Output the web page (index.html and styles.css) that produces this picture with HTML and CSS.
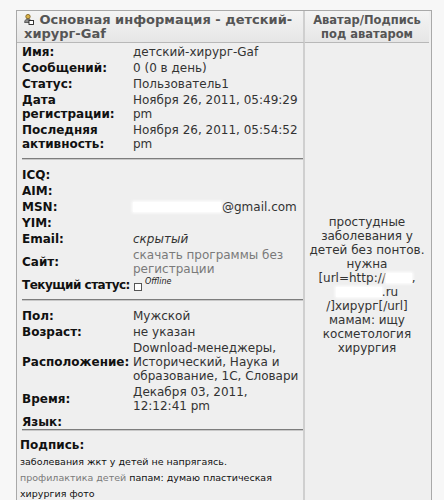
FILE: index.html
```html
<html lang="ru">
<head>
    <meta charset="UTF-8">
    <link rel="stylesheet" href="styles.css">
    <title>Профиль</title>
</head>
<body>

    <div class="profile">
        <div class="head head-main">
            <svg class="user-icon" width="10" height="11" viewBox="0 0 10 11">
                <circle cx="4" cy="2.6" r="2.2" fill="#d9b24a" stroke="#7a5a14" stroke-width="0.8"/>
                <path d="M0.6 8.5 C0.8 5.8 2.2 5 4 5 C5.8 5 7.2 5.8 7.4 8.5 Z" fill="#8c8c8c" stroke="#444" stroke-width="0.8"/>
                <rect x="5" y="6.5" width="4.5" height="4" fill="#fff" stroke="#222" stroke-width="0.9"/>
            </svg>
            Основная информация - детский-хирург-Gaf
        </div>
        <div class="head head-side">Аватар/Подпись под аватаром</div>

        <div class="main-cell">
            <div class="stats">
                <span class="label">Имя:</span><span class="value">детский-хирург-Gaf</span>
                <span class="label">Сообщений:</span><span class="value">0 (0 в день)</span>
                <span class="label">Статус:</span><span class="value">Пользователь1</span>
                <span class="label">Дата регистрации:</span><span class="value">Ноября 26, 2011, 05:49:29 pm</span>
                <span class="label">Последняя активность:</span><span class="value">Ноября 26, 2011, 05:54:52 pm</span>
            </div>
            <hr class="sep">
            <div class="stats">
                <span class="label">ICQ:</span><span class="value"></span>
                <span class="label">AIM:</span><span class="value"></span>
                <span class="label">MSN:</span><span class="value"><span class="blot mail-blot"></span>@gmail.com</span>
                <span class="label">YIM:</span><span class="value"></span>
                <span class="label">Email:</span><span class="value"><em>скрытый</em></span>
                <span class="label">Сайт:</span><span class="value link">скачать программы без регистрации</span>
                <span class="label label-tight">Текущий статус:</span><span class="value"><span class="status-box"></span><em class="offline">Offline</em></span>
            </div>
            <hr class="sep">
            <div class="stats">
                <span class="label">Пол:</span><span class="value">Мужской</span>
                <span class="label">Возраст:</span><span class="value">не указан</span>
                <span class="label">Расположение:</span><span class="value">Download-менеджеры, Исторический, Наука и образование, 1С, Словари</span>
                <span class="label">Время:</span><span class="value">Декабря 03, 2011, 12:12:41 pm</span>
                <span class="label">Язык:</span><span class="value"></span>
            </div>
            <hr class="sep sep-last">
            <div class="signature">
                <div class="sig-title">Подпись:</div>
                <p>заболевания жкт у детей не напрягаясь. <span class="link">профилактика детей</span> папам: думаю пластическая хирургия фото</p>
            </div>
        </div>

        <div class="side-cell">
            <p class="avatar-text">простудные заболевания у детей без понтов. нужна <span class="nowrap">[url=http://<span class="blot blot-a"></span>,</span><br><span class="blot blot-b"></span>.ru<br>/]хирург[/url] мамам: ищу косметология хирургия</p>
        </div>
    </div>

</body>
</html>
```

FILE: styles.css
```css
body {
    margin: 0;
    background-color: #f7f7f7;
    font-family: "DejaVu Sans", Verdana, sans-serif;
}

.profile {
    display: grid;
    grid-template-columns: 288px 124px;
    margin: 10px 0 0 16px;
    width: 414px;
    border: 1px solid #a9a9a9;
    border-bottom: 2px solid #b5b5b5;
    background-color: #efefef;
}

.head {
    padding: 2px 3px 1px 3px;
    font-size: 13px;
    line-height: 14px;
    font-weight: bold;
    color: #555;
    background: linear-gradient(#f4f4f4, #e6e6e6);
    border-bottom: 1px solid #b8b8b8;
}

.head-main {
    padding-left: 7px;
    border-right: 2px solid #cfcfcf;
}

.head-side {
    font-size: 11.5px;
    text-align: center;
    padding-left: 1px;
    padding-right: 1px;
}

.user-icon {
    vertical-align: -1px;
    margin-right: 1px;
}

.main-cell {
    padding: 2px 3px 0 5px;
    border-right: 2px solid #cfcfcf;
}

.stats {
    display: grid;
    grid-template-columns: 111px 1fr;
    row-gap: 2px;
    align-items: center;
    font-size: 12px;
    line-height: 14px;
}

.label {
    font-weight: bold;
    color: #111;
}

.label-tight {
    white-space: nowrap;
    letter-spacing: -0.5px;
}

.value {
    color: #333;
    min-height: 14px;
}

.link {
    color: #7a7a7a;
}

.sep {
    margin: 7px 0 8px 0;
    border: none;
    border-top: 1px solid #7d7d7d;
    border-bottom: 1px solid #c8c8c8;
    height: 0;
    width: 281px;
}

.sep-last {
    margin-top: 0;
    margin-bottom: 6px;
}

.blot {
    display: inline-block;
    background-color: #fff;
    box-shadow: 0 0 3px 1px #fff;
    height: 10px;
    vertical-align: -1px;
}

.mail-blot {
    width: 88px;
    margin-right: 1px;
}

.status-box {
    display: inline-block;
    width: 6px;
    height: 6px;
    border: 1px solid #555;
    background-color: #fff;
    margin: 0 3px 0 1px;
    vertical-align: -3px;
}

.offline {
    font-size: 8px;
    line-height: 8px;
    vertical-align: 4px;
    color: #222;
}

.signature {
    color: #111;
}

.sig-title {
    font-size: 12px;
    font-weight: bold;
    line-height: 16px;
    margin-left: -2px;
}

.signature p {
    margin: 1px 0 0 -2px;
    font-size: 9.5px;
    line-height: 16px;
}

.side-cell {
    display: flex;
    align-items: center;
    justify-content: center;
    padding: 24px 2px 0 2px;
}

.avatar-text {
    margin: 0;
    text-align: center;
    font-size: 12px;
    line-height: 14px;
    color: #333;
}

.nowrap {
    white-space: nowrap;
}

.blot-a {
    width: 26px;
}

.blot-b {
    width: 46px;
}
```
